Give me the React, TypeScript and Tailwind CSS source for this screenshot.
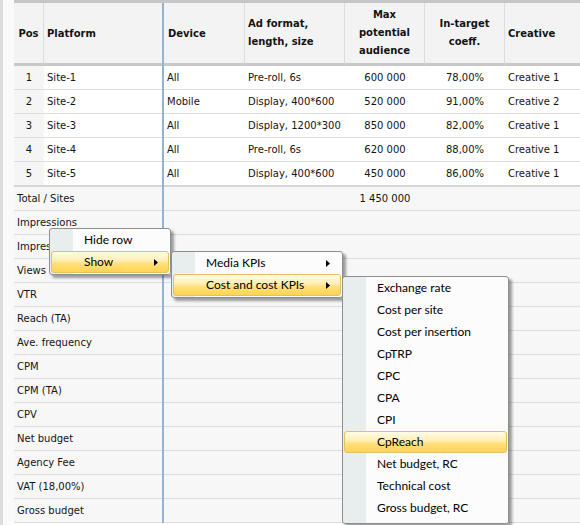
import React from 'react';

const SITES = [
  { pos: 1, site: 'Site-1', device: 'All', format: 'Pre-roll, 6s', audience: '600 000', coeff: '78,00%', creative: 'Creative 1' },
  { pos: 2, site: 'Site-2', device: 'Mobile', format: 'Display, 400*600', audience: '520 000', coeff: '91,00%', creative: 'Creative 2' },
  { pos: 3, site: 'Site-3', device: 'All', format: 'Display, 1200*300', audience: '850 000', coeff: '82,00%', creative: 'Creative 1' },
  { pos: 4, site: 'Site-4', device: 'All', format: 'Pre-roll, 6s', audience: '620 000', coeff: '88,00%', creative: 'Creative 1' },
  { pos: 5, site: 'Site-5', device: 'All', format: 'Display, 400*600', audience: '450 000', coeff: '86,00%', creative: 'Creative 1' },
];

const SUMMARY = [
  { label: 'Total / Sites', audience: '1 450 000' },
  { label: 'Impressions' },
  { label: 'Impressions (TA)' },
  { label: 'Views' },
  { label: 'VTR' },
  { label: 'Reach (TA)' },
  { label: 'Ave. frequency' },
  { label: 'CPM' },
  { label: 'CPM (TA)' },
  { label: 'CPV' },
  { label: 'Net budget' },
  { label: 'Agency Fee' },
  { label: 'VAT (18,00%)' },
  { label: 'Gross budget' },
];

const COST_KPIS = [
  'Exchange rate',
  'Cost per site',
  'Cost per insertion',
  'CpTRP',
  'CPC',
  'CPA',
  'CPI',
  'CpReach',
  'Net budget, RC',
  'Technical cost',
  'Gross budget, RC',
];

function Arrow() {
  return (
    <svg width="4" height="7" viewBox="0 0 4 7" className="ml-auto mr-[10px] shrink-0">
      <path d="M0 0L4 3.5L0 7Z" fill="#000" />
    </svg>
  );
}

type MenuItem = { label: string; active?: boolean; sub?: boolean };

function Menu({ className, items, bottomPad }: { className: string; items: MenuItem[]; bottomPad: string }) {
  return (
    <div
      className={`absolute border border-[#8e8e8e] rounded-[3px] bg-[linear-gradient(to_right,#e8eded_23px,#fcfcfc_23px)] shadow-[3px_3px_3px_rgba(0,0,0,0.38)] font-['Lato','Open_Sans',sans-serif] text-[12px] text-black ${bottomPad} ${className}`}
    >
      {items.map((item) => (
        <div
          key={item.label}
          className={`h-[22px] mx-[1px] flex items-center pl-[32px] border rounded-[3px] ${
            item.active
              ? 'border-[#e3c15e] bg-[linear-gradient(to_bottom,#fffbe6_0%,#fff0b8_40%,#ffdf7a_60%,#ffd452_100%)]'
              : 'border-transparent'
          }`}
        >
          <span className="whitespace-nowrap">{item.label}</span>
          {item.sub && <Arrow />}
        </div>
      ))}
    </div>
  );
}

export default function App() {
  const headBorder = 'border-b-[3px] border-b-[#c8c8c8]';
  const headSep = 'border-r border-r-[#dcdcdc]';

  return (
    <div className="relative w-[580px] h-[525px] overflow-hidden bg-white flex font-['DejaVu_Sans',sans-serif] text-[10px] text-[#141414]">
      {/* left gutter */}
      <div className="w-[14px] shrink-0 border-l-[3px] border-l-[#dcdcdc] bg-[#fafafa]" />

      {/* grid */}
      <div className="flex-1 flex flex-col border-t-[3px] border-t-[#c6c6c6]">
        {/* HEADER */}
        <div className="flex h-[63px] shrink-0 bg-[#f3f3f3] font-bold">
          <div className={`w-[30px] flex items-center justify-center ${headSep} ${headBorder}`}>Pos</div>
          <div className={`w-[118px] flex items-center pl-[3px] ${headBorder}`}>Platform</div>
          <div className="w-[2px] bg-[#95b3d3]" />
          <div className={`w-[81px] flex items-center pl-[4px] ${headSep} ${headBorder}`}>Device</div>
          <div className={`w-[100px] flex items-center pl-[3px] leading-[18px] ${headSep} ${headBorder}`}>
            <div>
              Ad format,
              <br />
              length, size
            </div>
          </div>
          <div className={`w-[80px] flex items-center justify-center text-center leading-[18px] ${headSep} ${headBorder}`}>
            <div>
              Max
              <br />
              potential
              <br />
              audience
            </div>
          </div>
          <div className={`w-[80px] flex items-center justify-center text-center leading-[18px] ${headSep} ${headBorder}`}>
            <div>
              In-target
              <br />
              coeff.
            </div>
          </div>
          <div className={`flex-1 flex items-center pl-[3px] ${headBorder}`}>Creative</div>
        </div>

        {/* SITE ROWS */}
        {SITES.map((row, i) => {
          const b =
            i === SITES.length - 1
              ? 'border-b-2 border-b-[#d6d6d6]'
              : 'border-b border-b-[#dedede]';
          const h = i === SITES.length - 1 ? 'h-[25px]' : 'h-[24px]';
          return (
            <div key={row.pos} className={`flex ${h} shrink-0 bg-white`}>
              <div className={`w-[30px] flex items-center justify-center bg-[#f5f5f5] ${b}`}>{row.pos}</div>
              <div className={`w-[118px] flex items-center pl-[3px] ${b}`}>{row.site}</div>
              <div className="w-[2px] bg-[#95b3d3]" />
              <div className={`w-[81px] flex items-center pl-[3px] ${b}`}>{row.device}</div>
              <div className={`w-[100px] flex items-center pl-[3px] whitespace-nowrap ${b}`}>{row.format}</div>
              <div className={`w-[80px] flex items-center justify-center ${b}`}>{row.audience}</div>
              <div className={`w-[80px] flex items-center justify-center ${b}`}>{row.coeff}</div>
              <div className={`flex-1 flex items-center pl-[3px] whitespace-nowrap ${b}`}>{row.creative}</div>
            </div>
          );
        })}

        {/* SUMMARY ROWS */}
        {SUMMARY.map((row) => {
          const b = 'border-b border-b-[#dcdcdc]';
          return (
            <div key={row.label} className="flex h-[24px] shrink-0 bg-[#f7f7f7]">
              <div className={`w-[148px] flex items-center pl-[3px] whitespace-nowrap ${b}`}>{row.label}</div>
              <div className="w-[2px] bg-[#95b3d3]" />
              <div className={`w-[81px] ${b}`} />
              <div className={`w-[100px] ${b}`} />
              <div className={`w-[80px] flex items-center justify-center ${b}`}>{row.audience ?? ''}</div>
              <div className={`w-[80px] ${b}`} />
              <div className={`flex-1 ${b}`} />
            </div>
          );
        })}
      </div>

      {/* CONTEXT MENUS */}
      <Menu
        className="left-[49px] top-[228px] w-[122px]"
        bottomPad="pb-[1px]"
        items={[{ label: 'Hide row' }, { label: 'Show', active: true, sub: true }]}
      />
      <Menu
        className="left-[171px] top-[251px] w-[172px]"
        bottomPad="pb-[1px]"
        items={[{ label: 'Media KPIs', sub: true }, { label: 'Cost and cost KPIs', active: true, sub: true }]}
      />
      <Menu
        className="left-[342px] top-[276px] w-[167px]"
        bottomPad="pb-[4px]"
        items={COST_KPIS.map((label) => ({ label, active: label === 'CpReach' }))}
      />
    </div>
  );
}
